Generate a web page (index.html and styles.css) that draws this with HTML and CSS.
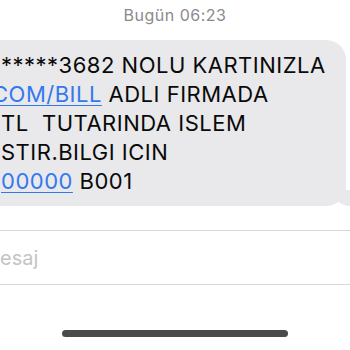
FILE: index.html
```html
<!DOCTYPE html>
<html lang="tr">
<head>
<meta charset="utf-8">
<link rel="stylesheet" href="styles.css">
</head>
<body>
<div class="screen">
  <div class="stamp">Bugün 06:23</div>
  <div class="bubble">
    <p class="line">*****3682 NOLU KARTINIZLA</p>
    <p class="line shift"><a class="link">COM/BILL</a> ADLI FIRMADA</p>
    <p class="line">TL&nbsp; TUTARINDA ISLEM</p>
    <p class="line">STIR.BILGI ICIN</p>
    <p class="line"><a class="link">00000</a> B001</p>
  </div>
  <div class="input"><span class="placeholder">esaj</span></div>
  <div class="home"></div>
</div>
</body>
</html>
```
FILE: styles.css
```css
html, body {
  margin: 0;
  padding: 0;
  background: #ffffff;
}
.screen {
  width: 350px;
  height: 350px;
  overflow: hidden;
  position: relative;
  font-family: Inter, "Liberation Sans", sans-serif;
}
.stamp {
  height: 30px;
  line-height: 30px;
  text-align: center;
  font-size: 16px;
  letter-spacing: 0.5px;
  color: #8a8a8e;
}
.bubble {
  position: relative;
  margin-top: 10px;
  margin-left: -20px;
  width: 366px;
  height: 166px;
  box-sizing: border-box;
  background: #e9e9eb;
  border-radius: 20px;
  padding: 11px 0 0 21px;
}
.bubble::after {
  content: "";
  position: absolute;
  right: -6px;
  bottom: 0;
  width: 16px;
  height: 16px;
  background: #e9e9eb;
  border-bottom-left-radius: 14px 10px;
}
.line {
  margin: 0;
  font-size: 22px;
  letter-spacing: 0.5px;
  line-height: 29px;
  color: #0a0a0a;
  white-space: nowrap;
}
.shift {
  text-indent: -9px;
}
.link {
  color: #3478f0;
  text-decoration: underline;
  text-decoration-thickness: 1px;
  text-underline-offset: 3px;
}
.input {
  margin-top: 24px;
  margin-left: -30px;
  width: 420px;
  height: 55px;
  box-sizing: border-box;
  border: 1px solid #d8d8da;
  border-radius: 22px;
  display: flex;
  align-items: center;
  padding-left: 29px;
}
.placeholder {
  font-size: 20px;
  color: #c4c4c7;
}
.home {
  margin: 45px auto 0;
  width: 226px;
  height: 7px;
  border-radius: 4px;
  background: #4a4a4a;
}
```
